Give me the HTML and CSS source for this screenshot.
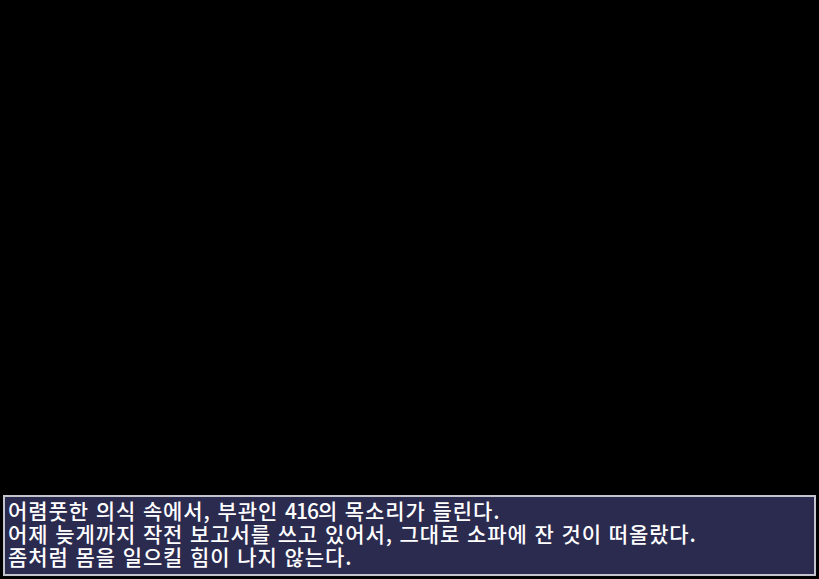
FILE: index.html
```html
<!DOCTYPE html>
<html lang="ko">
<head>
    <meta charset="UTF-8">
    <meta name="viewport" content="width=device-width, initial-scale=1.0">
    <title>대화</title>
    <link rel="stylesheet" href="styles.css">
</head>
<body>
    <div class="cena"></div>

    <div class="dialogo">
        <p>어렴풋한 의식 속에서, 부관인 <span class="num">416</span>의 목소리가 들린다.</p>
        <p>어제 늦게까지 작전 보고서를 쓰고 있어서, 그대로 소파에 잔 것이 떠올랐다.</p>
        <p>좀처럼 몸을 일으킬 힘이 나지 않는다.</p>
    </div>
</body>
</html>
```

FILE: styles.css
```css
html, body {
    height: 100%;
}
body {
    margin: 0;
    padding: 0 3px 3px;
    box-sizing: border-box;
    background-color: #000;
    display: flex;
    flex-direction: column;
    font-family: "Noto Sans CJK KR", "Noto Sans", sans-serif;
}
.cena {
    flex: 1;
}
.dialogo {
    height: 81px;
    box-sizing: border-box;
    background-color: #2b2a4f;
    border: 2px solid #c4c4cc;
    padding: 2px 3px;
    color: #fff;
}
.dialogo p {
    margin: 0;
    font-size: 21px;
    font-weight: 500;
    line-height: 23px;
    letter-spacing: 0.9px;
    white-space: nowrap;
}
.dialogo .num {
    letter-spacing: -1px;
}
```
